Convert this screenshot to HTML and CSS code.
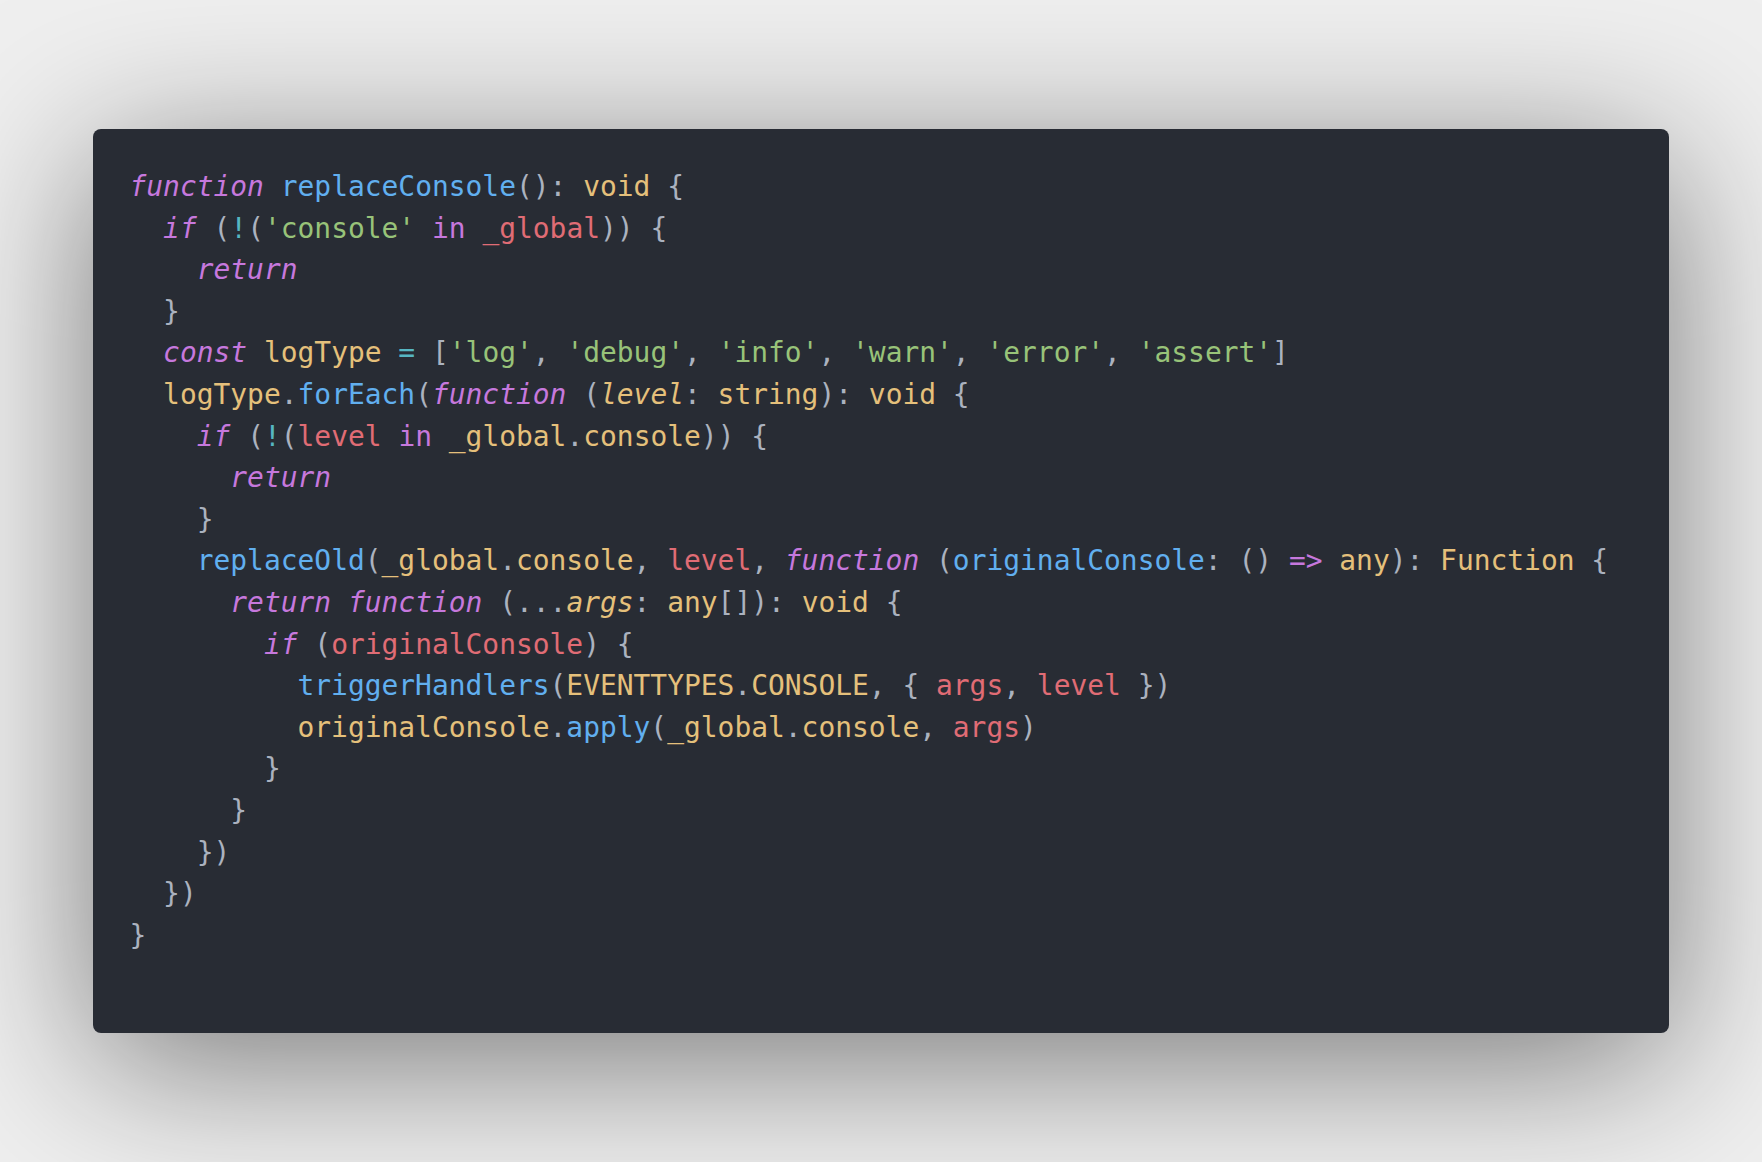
FILE: index.html
```html
<!DOCTYPE html>
<html lang="en">
<head>
<meta charset="utf-8">
<title>replaceConsole</title>
<link rel="stylesheet" href="styles.css">
</head>
<body>
<main class="stage">
<div class="card">
<pre class="code"><span class="k">function</span> <span class="f">replaceConsole</span>(): <span class="t">void</span> {
  <span class="k">if</span> (<span class="o">!</span>(<span class="s">'console'</span> <span class="kw">in</span> <span class="v">_global</span>)) {
    <span class="k">return</span>
  }
  <span class="k">const</span> <span class="t">logType</span> <span class="o">=</span> [<span class="s">'log'</span>, <span class="s">'debug'</span>, <span class="s">'info'</span>, <span class="s">'warn'</span>, <span class="s">'error'</span>, <span class="s">'assert'</span>]
  <span class="t">logType</span>.<span class="f">forEach</span>(<span class="k">function</span> (<span class="p">level</span>: <span class="t">string</span>): <span class="t">void</span> {
    <span class="k">if</span> (<span class="o">!</span>(<span class="v">level</span> <span class="kw">in</span> <span class="t">_global</span>.<span class="t">console</span>)) {
      <span class="k">return</span>
    }
    <span class="f">replaceOld</span>(<span class="t">_global</span>.<span class="t">console</span>, <span class="v">level</span>, <span class="k">function</span> (<span class="f">originalConsole</span>: () <span class="kw">=&gt;</span> <span class="t">any</span>): <span class="t">Function</span> {
      <span class="k">return</span> <span class="k">function</span> (...<span class="p">args</span>: <span class="t">any</span>[]): <span class="t">void</span> {
        <span class="k">if</span> (<span class="v">originalConsole</span>) {
          <span class="f">triggerHandlers</span>(<span class="t">EVENTTYPES</span>.<span class="t">CONSOLE</span>, { <span class="v">args</span>, <span class="v">level</span> })
          <span class="t">originalConsole</span>.<span class="f">apply</span>(<span class="t">_global</span>.<span class="t">console</span>, <span class="v">args</span>)
        }
      }
    })
  })
}</pre>
</div>
</main>
</body>
</html>
```

FILE: styles.css
```css
html, body {
  margin: 0;
  padding: 0;
  background: #efefef;
  overflow: hidden;
}

.stage {
  padding: 129px 0 0 93px;
  height: 1162px;
  box-sizing: border-box;
}

.card {
  width: 1576px;
  height: 904px;
  box-sizing: border-box;
  background: #282c34;
  border-radius: 8px;
  box-shadow: 0 30px 160px rgba(0, 0, 0, 0.5);
  padding: 37px 38px 0 36.5px;
}

.code {
  margin: 0;
  font-family: "DejaVu Sans Mono", "Liberation Mono", monospace;
  font-size: 27.92px;
  line-height: 41.6px;
  color: #abb2bf;
  white-space: pre;
}

.k { color: #c678dd; font-style: italic; }
.kw { color: #c678dd; }
.f { color: #61afef; }
.t { color: #e5c07b; }
.p { color: #e5c07b; font-style: italic; }
.s { color: #98c379; }
.v { color: #e06c75; }
.o { color: #56b6c2; }
```
